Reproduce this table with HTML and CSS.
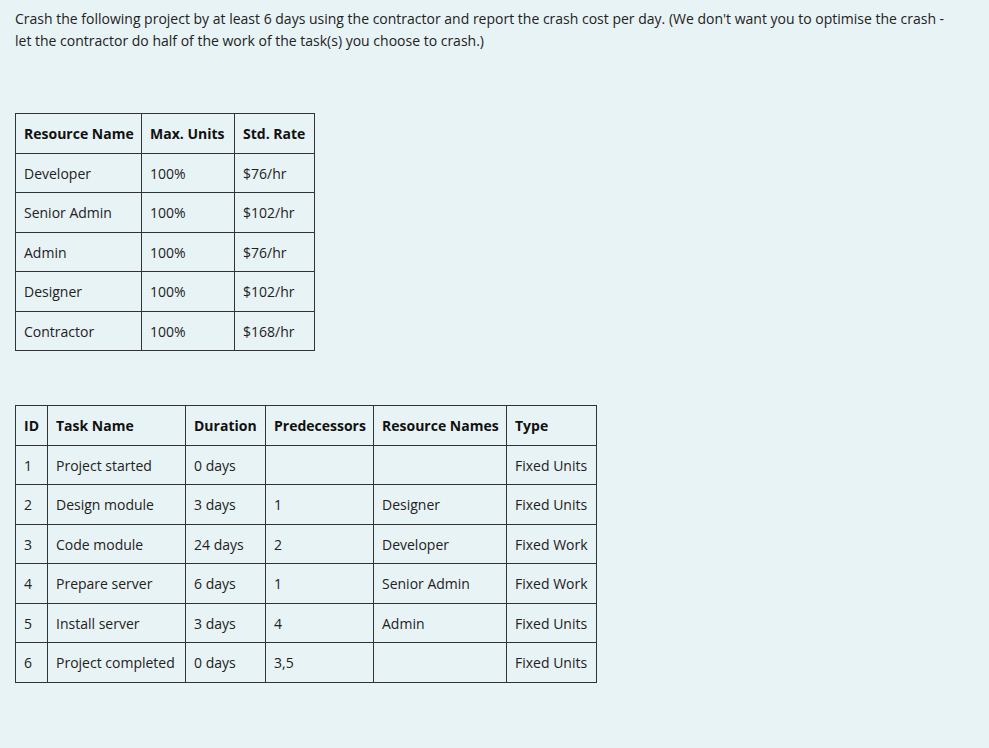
FILE: index.html
```html
<!DOCTYPE html>
<html>
<head>
<meta charset="utf-8">
<link rel="stylesheet" href="styles.css">
</head>
<body>
<div class="page">
  <p class="intro">Crash the following project by at least 6 days using the contractor and report the crash cost per day. (We don't want you to optimise the crash - let the contractor do half of the work of the task(s) you choose to crash.)</p>

  <table class="grid res">
    <colgroup><col class="c1"><col class="c2"><col class="c3"></colgroup>
    <thead>
      <tr><th>Resource Name</th><th>Max. Units</th><th>Std. Rate</th></tr>
    </thead>
    <tbody>
      <tr><td>Developer</td><td>100%</td><td>$76/hr</td></tr>
      <tr><td>Senior Admin</td><td>100%</td><td>$102/hr</td></tr>
      <tr><td>Admin</td><td>100%</td><td>$76/hr</td></tr>
      <tr><td>Designer</td><td>100%</td><td>$102/hr</td></tr>
      <tr><td>Contractor</td><td>100%</td><td>$168/hr</td></tr>
    </tbody>
  </table>

  <table class="grid tasks">
    <colgroup><col class="t1"><col class="t2"><col class="t3"><col class="t4"><col class="t5"><col class="t6"></colgroup>
    <thead>
      <tr><th>ID</th><th>Task Name</th><th>Duration</th><th>Predecessors</th><th>Resource Names</th><th>Type</th></tr>
    </thead>
    <tbody>
      <tr><td>1</td><td>Project started</td><td>0 days</td><td></td><td></td><td>Fixed Units</td></tr>
      <tr><td>2</td><td>Design module</td><td>3 days</td><td>1</td><td>Designer</td><td>Fixed Units</td></tr>
      <tr><td>3</td><td>Code module</td><td>24 days</td><td>2</td><td>Developer</td><td>Fixed Work</td></tr>
      <tr><td>4</td><td>Prepare server</td><td>6 days</td><td>1</td><td>Senior Admin</td><td>Fixed Work</td></tr>
      <tr><td>5</td><td>Install server</td><td>3 days</td><td>4</td><td>Admin</td><td>Fixed Units</td></tr>
      <tr><td>6</td><td>Project completed</td><td>0 days</td><td>3,5</td><td></td><td>Fixed Units</td></tr>
    </tbody>
  </table>
</div>
</body>
</html>
```

FILE: styles.css
```css
html, body {
  margin: 0;
  padding: 0;
  background: #e8f3f5;
}
body {
  font-family: "Segoe UI", "Open Sans", "Noto Sans", sans-serif;
  font-size: 14px;
  color: #222;
}
.page {
  padding: 8px 15px;
}
.intro {
  margin: 0;
  width: 945px;
  line-height: 22px;
}
.grid {
  border-collapse: collapse;
  table-layout: fixed;
}
.grid th, .grid td {
  border: 1px solid #333;
  padding: 9px 8px 7px;
  line-height: 22.5px;
  text-align: left;
  white-space: nowrap;
  overflow: hidden;
}
.grid th {
  font-weight: 700;
  color: #111;
}
.res {
  margin-top: 61px;
  width: 300px;
}
.res .c1 { width: 126px; }
.res .c2 { width: 93px; }
.res .c3 { width: 80px; }
.tasks {
  margin-top: 54px;
  width: 582px;
}
.tasks .t1 { width: 32px; }
.tasks .t2 { width: 138px; }
.tasks .t3 { width: 80px; }
.tasks .t4 { width: 108px; }
.tasks .t5 { width: 133px; }
.tasks .t6 { width: 90px; }
```
